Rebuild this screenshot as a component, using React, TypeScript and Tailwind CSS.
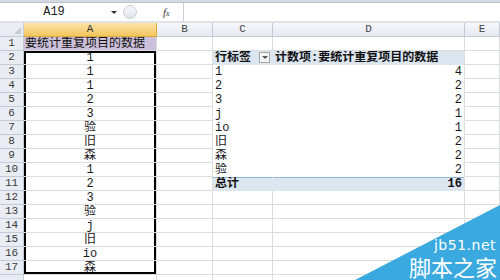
import React from "react";

const font = "font-['Liberation_Mono','Noto_Sans_CJK_SC',monospace]";

const colA = ["1", "1", "1", "2", "3", "验", "旧", "森", "1", "2", "3", "验", "j", "旧", "io", "森"];

const pivot = [
  ["1", "4"],
  ["2", "2"],
  ["3", "2"],
  ["j", "1"],
  ["io", "1"],
  ["旧", "2"],
  ["森", "2"],
  ["验", "2"],
];

function Cell({ w, className = "", children }: { w: string; className?: string; children?: React.ReactNode }) {
  return (
    <div className={`${w} h-full shrink-0 border-r border-b flex items-center overflow-hidden whitespace-nowrap ${className}`}>
      {children}
    </div>
  );
}

function Row({ n, children }: { n: number; children: React.ReactNode }) {
  return (
    <div className="flex h-[14px]">
      <div className="w-[24px] h-full shrink-0 flex items-center justify-center bg-[#e9edf3] border-r border-b border-[#c3cbd7] text-[11px] text-[#3a3a3a]">
        {n}
      </div>
      {children}
    </div>
  );
}

const grid = "border-[#dadcdd]";

export default function App() {
  const rows = [];
  for (let r = 1; r <= 17; r++) {
    // column A
    let a: React.ReactNode = null;
    let aCls = `${grid} justify-center`;
    if (r === 1) {
      a = <span className="pl-[1px] text-[#111]">要统计重复项目的数据</span>;
      aCls = `${grid} bg-[#ccc0da] justify-start`;
    } else {
      a = colA[r - 2];
      const sh =
        r === 2
          ? "shadow-[inset_2px_0_0_#000,inset_-2px_0_0_#000,inset_0_2px_0_#000]"
          : r === 17
          ? "shadow-[inset_2px_0_0_#000,inset_-2px_0_0_#000,inset_0_-2px_0_#000]"
          : "shadow-[inset_2px_0_0_#000,inset_-2px_0_0_#000]";
      aCls = `${grid} justify-center ${sh}`;
    }

    // pivot C / D
    let c: React.ReactNode = null;
    let d: React.ReactNode = null;
    let cCls = grid;
    let dCls = grid;
    if (r === 2) {
      cCls = "border-transparent bg-[#dce6f1] justify-between font-bold";
      dCls = "border-r-[#dadcdd] border-b-transparent bg-[#dce6f1] font-bold";
      c = (
        <>
          <span className="pl-[2px] text-[#111]">行标签</span>
          <span className="mr-[2px] w-[11px] h-[11px] border border-[#a6a6a6] bg-[#f4f4f4] flex items-center justify-center">
            <span className="w-0 h-0 border-x-[3px] border-x-transparent border-t-[3px] border-t-[#555]" />
          </span>
        </>
      );
      d = <span className="pl-[2px] text-[#111]">计数项:要统计重复项目的数据</span>;
    } else if (r >= 3 && r <= 10) {
      cCls = "border-transparent";
      dCls = "border-r-[#dadcdd] border-b-transparent justify-end";
      c = <span className="pl-[2px]">{pivot[r - 3][0]}</span>;
      d = <span className="pr-[2px]">{pivot[r - 3][1]}</span>;
    } else if (r === 11) {
      cCls = "border-transparent bg-[#dce6f1] font-bold shadow-[inset_0_1px_0_#95b3d7]";
      dCls = "border-r-[#dadcdd] border-b-transparent bg-[#dce6f1] font-bold justify-end shadow-[inset_0_1px_0_#95b3d7]";
      c = <span className="pl-[2px] text-[#111]">总计</span>;
      d = <span className="pr-[2px] text-[#111]">16</span>;
    }

    rows.push(
      <Row key={r} n={r}>
        <Cell w="w-[133px]" className={aCls}>{a}</Cell>
        <Cell w="w-[56px]" className={grid} />
        <Cell w="w-[60px]" className={cCls}>{c}</Cell>
        <Cell w="w-[192px]" className={dCls}>{d}</Cell>
        <Cell w="w-[35px]" className={grid} />
      </Row>
    );
  }

  const headers = [
    { l: "A", w: "w-[133px]", active: true },
    { l: "B", w: "w-[56px]" },
    { l: "C", w: "w-[60px]" },
    { l: "D", w: "w-[192px]" },
    { l: "E", w: "w-[35px]" },
  ];

  return (
    <div className={`relative w-[500px] h-[280px] overflow-hidden bg-white text-[12px] leading-none text-[#1a1a1a] ${font}`}>
      {/* ribbon edge */}
      <div className="h-[3px] bg-[#d3d9e1] border-b border-[#b9c2ce]" />
      {/* formula bar */}
      <div className="h-[18px] flex items-center bg-white">
        <div className="w-[108px] h-full flex items-center justify-center text-[12px] text-[#222]">A19</div>
        <div className="w-[12px] flex items-center justify-center">
          <span className="w-0 h-0 border-x-[3px] border-x-transparent border-t-[3px] border-t-[#333]" />
        </div>
        <div className="ml-[3px] w-[14px] h-[14px] rounded-full border border-[#c9ced6] bg-gradient-to-b from-[#f7f8fa] to-[#dfe3e9]" />
        <div className="flex-1" />
        <div className="w-[16px] mr-[4px] text-[11px] italic font-['Liberation_Serif',serif] text-[#333]">
          f<span className="text-[8px]">x</span>
        </div>
        <div className="w-[317px] h-full border-l border-[#c9ced6] bg-white" />
      </div>
      <div className="h-[2px] bg-[#dfe3e8]" />
      {/* column headers */}
      <div className="flex h-[14px]">
        <div className="w-[24px] h-full shrink-0 bg-[#e9edf3] border-r border-b border-[#c3cbd7] relative">
          <span className="absolute right-[2px] bottom-[2px] w-0 h-0 border-l-[7px] border-l-transparent border-b-[7px] border-b-[#c7ccd3]" />
        </div>
        {headers.map((h) => (
          <div
            key={h.l}
            className={`${h.w} h-full shrink-0 flex items-center justify-center border-r border-b text-[11px] ${
              h.active
                ? "bg-gradient-to-b from-[#fbe3a6] to-[#f3c55c] border-[#d9a93f] text-[#333]"
                : "bg-gradient-to-b from-[#f6f8fb] to-[#e4e9f0] border-[#c3cbd7] text-[#444]"
            }`}
          >
            {h.l}
          </div>
        ))}
      </div>
      {rows}
      {/* next row, partly visible */}
      <div className="flex h-[6px]">
        <div className="w-[24px] h-full shrink-0 bg-[#e9edf3] border-r border-[#c3cbd7]" />
        <div className="w-[133px] h-full border-r border-[#dadcdd]" />
        <div className="w-[56px] h-full border-r border-[#dadcdd]" />
        <div className="w-[60px] h-full border-r border-[#dadcdd]" />
        <div className="w-[192px] h-full border-r border-[#dadcdd]" />
      </div>

      {/* watermark */}
      <svg className="absolute right-0 bottom-0" width="145" height="75" viewBox="0 0 145 75">
        <polygon points="0,75 145,0 145,75" fill="#3aa9df" />
      </svg>
      <div className="absolute right-[3px] bottom-[1px] flex flex-col items-end text-white">
        <span className="mr-[1px] text-[14px] leading-[15px] font-['DejaVu_Sans',sans-serif] tracking-[0.5px]">jb51.net</span>
        <span className="text-[22px] leading-[26px] font-['Noto_Sans_CJK_SC',sans-serif]">脚本之家</span>
      </div>
    </div>
  );
}
